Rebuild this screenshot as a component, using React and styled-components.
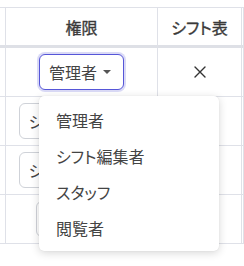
import React from "react";
import styled, { createGlobalStyle } from "styled-components";

const GlobalStyle = createGlobalStyle`
  html, body { margin: 0; padding: 0; background: #fff; }
  body {
    font-family: "Noto Sans CJK JP", "Noto Sans", sans-serif;
    font-feature-settings: "palt";
    color: #444;
  }
`;

const Page = styled.div`
  width: 244px;
  height: 266px;
  overflow: hidden;
  padding-top: 7px;
  box-sizing: border-box;
`;

const Grid = styled.div`
  display: grid;
  grid-template-columns: 6px 152px 84px 1fr;
  border-top: 1px solid #dfe1e8;
`;

const Cell = styled.div`
  box-sizing: border-box;
  height: ${(p) => (p.$head ? "40px" : "49px")};
  border-right: 1px solid #dfe1e8;
  border-bottom: ${(p) => (p.$head ? "3px solid #dee0e6" : "1px solid #dfe1e8")};
  display: flex;
  align-items: center;
  justify-content: center;
  font-size: 16px;
  font-weight: 400;
  color: ${(p) => (p.$head ? "#3a3a3a" : "#444")};
  -webkit-text-stroke: ${(p) => (p.$head ? "0.35px #3a3a3a" : "0")};
`;

const SelectWrap = styled.div`
  position: relative;
  display: inline-flex;
`;

const Select = styled.div`
  box-sizing: border-box;
  display: inline-flex;
  align-items: center;
  gap: 6px;
  height: 36px;
  padding: 0 12px 0 9px;
  border: 1px solid ${(p) => (p.$active ? "#5656d8" : "#cfd2d8")};
  border-radius: 6px;
  background: #fff;
  box-shadow: ${(p) => (p.$active ? "0 0 0 2px rgba(86, 86, 216, 0.22)" : "none")};
  font-size: 16px;
  color: #444;
  white-space: nowrap;
`;

const Caret = styled.span`
  width: 0;
  height: 0;
  border-left: 4px solid transparent;
  border-right: 4px solid transparent;
  border-top: 4px solid #555;
`;

const Menu = styled.ul`
  position: absolute;
  top: 42px;
  left: 0;
  width: 180px;
  margin: 0;
  padding: 6px 0 5px;
  list-style: none;
  background: #fff;
  border-radius: 5px;
  box-shadow: 0 2px 8px rgba(0, 0, 0, 0.16), 0 0 1px rgba(0, 0, 0, 0.12);
  z-index: 10;
`;

const MenuItem = styled.li`
  height: 36px;
  display: flex;
  align-items: center;
  padding-left: 17px;
  font-size: 16px;
  color: #444;
`;

const Cross = () => (
  <svg width="12" height="12" viewBox="0 0 12 12">
    <path d="M1 1 L11 11 M11 1 L1 11" stroke="#333" strokeWidth="1.4" strokeLinecap="round" />
  </svg>
);

const Check = () => (
  <svg width="14" height="12" viewBox="0 0 14 12">
    <path d="M1 6.5 L5 10.5 L13 1" stroke="#333" strokeWidth="1.6" fill="none" strokeLinecap="round" />
  </svg>
);

const rows = [
  { role: "管理者", active: true, sheet: "x" },
  { role: "シフト編集者", sheet: "x" },
  { role: "シフト編集者", sheet: "x" },
  { role: "スタッフ", sheet: "check" },
];

const options = ["管理者", "シフト編集者", "スタッフ", "閲覧者"];

export default function App() {
  return (
    <>
      <GlobalStyle />
      <Page>
        <Grid>
          <Cell $head />
          <Cell $head>権限</Cell>
          <Cell $head>シフト表</Cell>
          <Cell $head />
          {rows.map((r, i) => (
            <React.Fragment key={i}>
              <Cell />
              <Cell>
                <SelectWrap>
                  <Select $active={r.active}>
                    <span>{r.role}</span>
                    <Caret />
                  </Select>
                  {r.active && (
                    <Menu>
                      {options.map((o) => (
                        <MenuItem key={o}>{o}</MenuItem>
                      ))}
                    </Menu>
                  )}
                </SelectWrap>
              </Cell>
              <Cell>{r.sheet === "x" ? <Cross /> : <Check />}</Cell>
              <Cell />
            </React.Fragment>
          ))}
        </Grid>
      </Page>
    </>
  );
}
